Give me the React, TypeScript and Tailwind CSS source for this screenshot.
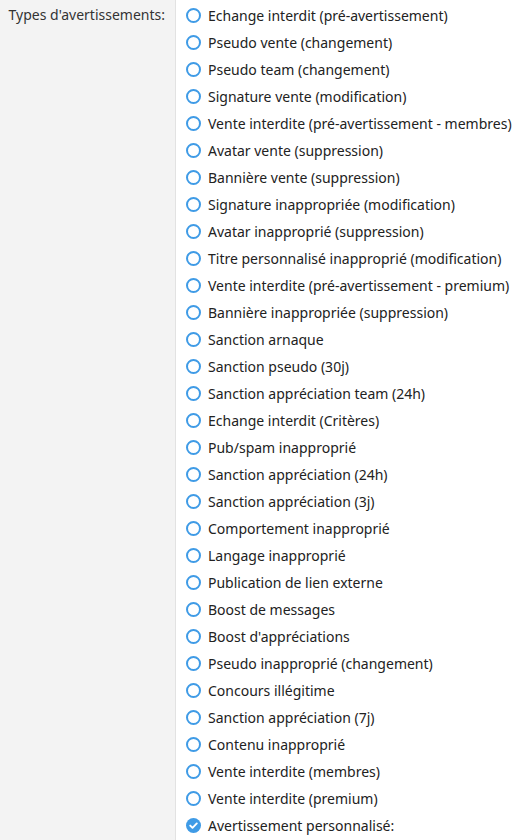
import React from "react";

const items = [
  "Echange interdit (pré-avertissement)",
  "Pseudo vente (changement)",
  "Pseudo team (changement)",
  "Signature vente (modification)",
  "Vente interdite (pré-avertissement - membres)",
  "Avatar vente (suppression)",
  "Bannière vente (suppression)",
  "Signature inappropriée (modification)",
  "Avatar inapproprié (suppression)",
  "Titre personnalisé inapproprié (modification)",
  "Vente interdite (pré-avertissement - premium)",
  "Bannière inappropriée (suppression)",
  "Sanction arnaque",
  "Sanction pseudo (30j)",
  "Sanction appréciation team (24h)",
  "Echange interdit (Critères)",
  "Pub/spam inapproprié",
  "Sanction appréciation (24h)",
  "Sanction appréciation (3j)",
  "Comportement inapproprié",
  "Langage inapproprié",
  "Publication de lien externe",
  "Boost de messages",
  "Boost d'appréciations",
  "Pseudo inapproprié (changement)",
  "Concours illégitime",
  "Sanction appréciation (7j)",
  "Contenu inapproprié",
  "Vente interdite (membres)",
  "Vente interdite (premium)",
  "Avertissement personnalisé:",
];

function Radio({ checked }: { checked: boolean }) {
  if (checked) {
    return (
      <svg width="15" height="15" viewBox="0 0 15 15" className="shrink-0">
        <circle cx="7.5" cy="7.5" r="7.5" fill="#3f9be6" />
        <path d="M4.2 7.6 L6.5 9.8 L10.8 5.4" stroke="#fff" strokeWidth="1.9" fill="none" strokeLinecap="round" strokeLinejoin="round" />
      </svg>
    );
  }
  return <span className="block w-[15px] h-[15px] shrink-0 rounded-full border-[2.5px] border-[#3f9be6] bg-white" />;
}

export default function App() {
  return (
    <div
      className="flex w-[526px] h-[840px] bg-white text-[14px] overflow-hidden"
      style={{ fontFamily: '"Noto Sans", "Open Sans", sans-serif' }}
    >
      <div className="w-[176px] shrink-0 bg-[#f3f3f3] border-r border-[#e2e2e2] pr-[10px] pt-[4px] text-right text-[#333]">
        <div className="leading-[22px]">Types d'avertissements:</div>
      </div>
      <div className="flex flex-col pl-[10px] pt-[2px]">
        {items.map((t, i) => (
          <div key={i} className="flex items-center h-[27px] gap-[7px]">
            <Radio checked={i === items.length - 1} />
            <span className="text-[#222] whitespace-nowrap leading-[20px]">{t}</span>
          </div>
        ))}
      </div>
    </div>
  );
}
